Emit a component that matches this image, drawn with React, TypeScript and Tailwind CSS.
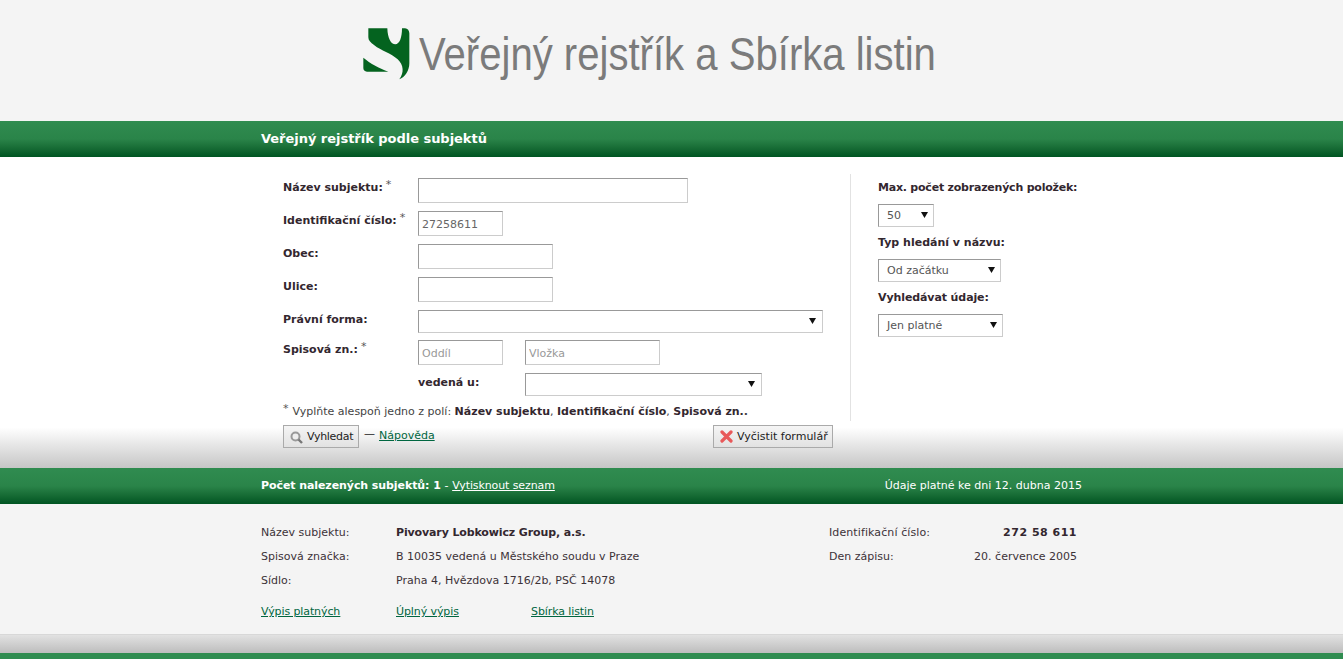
const font = "font-['DejaVu_Sans',Verdana,sans-serif]";

function GreenBar({ children }: { children: React.ReactNode }) {
  return (
    <div className="h-[36px] bg-gradient-to-b from-[#308c50] via-[#2a8449] to-[#005522] text-white">
      <div className="mx-auto flex h-full w-[821px] items-center justify-between">{children}</div>
    </div>
  );
}

function Logo() {
  return (
    <svg width="47" height="52" viewBox="24 24 141 156" className="shrink-0">
      <path
        d="M40 25 L97 25 C98 56 108 73 121 73 C133 73 141 54 141 25 L150 25 C158 26 163 32 163 40 L163 130 C163 152 150 172 133 178 C148 158 146 135 128 118 C108 100 78 92 58 76 C46 67 40 62 40 52 Z"
        fill="#04631f"
      />
      <path d="M25 113 C45 130 75 146 100 155 L36 155 C29 155 25 150 25 144 Z" fill="#04631f" />
    </svg>
  );
}

function Field({ label, star, children, className }: { label?: string; star?: boolean; children: React.ReactNode; className?: string }) {
  return (
    <div className={"flex " + (className ?? "mb-[8px]")}>
      <label className="w-[135px] shrink-0 pt-[3px] font-bold leading-[14px] text-[#33272f]">
        {label}
        {star && <sup className="relative top-[-1px] ml-[3px] align-top text-[11px] font-normal leading-[10px] text-[#555]">*</sup>}
      </label>
      {children}
    </div>
  );
}

function TextInput({ width, value, placeholder, className }: { width: string; value?: string; placeholder?: string; className?: string }) {
  return (
    <input
      readOnly
      defaultValue={value}
      placeholder={placeholder}
      className={
        "h-[25px] border border-t-[#999] border-r-[#ccc] border-b-[#ccc] border-l-[#999] bg-white px-[3px] pt-[2px] text-[11px] text-[#666] outline-none placeholder:text-[#999] " +
        width + " " + (className ?? "")
      }
    />
  );
}

function Select({ width, value, arrowRight = "right-[5px]" }: { width: string; value?: string; arrowRight?: string }) {
  return (
    <div className={"relative h-[23px] border border-t-[#999] border-r-[#ccc] border-b-[#ccc] border-l-[#999] bg-white pl-[8px] leading-[22px] text-[#555] " + width}>
      {value}
      <svg width="7" height="7" viewBox="0 0 7 7" className={"absolute top-[6px] " + arrowRight}>
        <path d="M0 1 L7 1 L3.5 7 Z" fill="#111" />
      </svg>
    </div>
  );
}

export default function App() {
  return (
    <div className={font + " min-h-[659px] overflow-hidden bg-[#f4f4f4] text-[11px] text-[#333]"}>
      <div className="flex h-[121px] items-start pt-[28px] pl-[363px]">
        <Logo />
        <span className="ml-[9px] mt-[-1px] origin-left scale-x-[0.853] font-['Liberation_Sans',sans-serif] text-[47px] leading-[54px] whitespace-nowrap text-[#7b7b7b]">
          Veřejný rejstřík a Sbírka listin
        </span>
      </div>

      <GreenBar>
        <span className="text-[13px] font-bold tracking-[-0.03px]">Veřejný rejstřík podle subjektů</span>
      </GreenBar>

      <div className="h-[311px] bg-gradient-to-b from-white from-[87%] to-[#c6c6c6]">
        <div className="mx-auto flex w-[821px] pt-[17px]">
          <div className="w-[589px] shrink-0 pl-[22px]">
            <div className="w-[550px] pt-[4px]">
              <Field label="Název subjektu:" star>
                <TextInput width="w-[270px]" />
              </Field>
              <Field label="Identifikační číslo:" star>
                <TextInput width="w-[85px]" value="27258611" />
              </Field>
              <Field label="Obec:">
                <TextInput width="w-[135px]" />
              </Field>
              <Field label="Ulice:">
                <TextInput width="w-[135px]" />
              </Field>
              <Field label="Právní forma:" className="mb-[7px]">
                <Select width="w-[405px]" arrowRight="right-[6px]" />
              </Field>
              <Field label="Spisová zn.:" star>
                <TextInput width="w-[85px]" placeholder="Oddíl" />
                <TextInput width="w-[135px]" placeholder="Vložka" className="ml-[22px]" />
              </Field>
              <div className="flex">
                <span className="w-[107px] pl-[135px] pt-[3px] font-bold leading-[14px] text-[#33272f] box-content whitespace-nowrap">vedená u:</span>
                <Select width="w-[237px]" arrowRight="right-[6px]" />
              </div>
              <p className="mt-[9px] leading-[14px] text-[#444] whitespace-nowrap">
                <sup className="relative top-[-1px] mr-[4px] align-top text-[11px] leading-[10px] text-[#555]">*</sup>
                Vyplňte alespoň jedno z polí: <b className="text-[#33272f]">Název subjektu</b>, <b className="text-[#33272f]">Identifikační číslo</b>, <b className="text-[#33272f]">Spisová zn.</b>
                <b>.</b>
              </p>
              <div className="mt-[6px] flex items-start justify-between">
                <div className="flex items-start">
                  <button className="flex h-[23px] w-[76px] items-center border border-[#aaa] bg-gradient-to-b from-[#f5f5f5] to-[#e2e2e2] pt-[2px] pl-[6px] tracking-[-0.3px] text-[#222]">
                    <svg width="13" height="13" viewBox="0 0 13 13" className="mr-[4px]">
                      <circle cx="5.5" cy="5.5" r="4" fill="#eee" stroke="#999" strokeWidth="2" />
                      <path d="M8.5 8.5 L12 12" stroke="#777" strokeWidth="2.4" />
                    </svg>
                    Vyhledat
                  </button>
                  <span className="mx-[5px] leading-[18px] text-[#222]">—</span>
                  <a className="ml-[-1px] pt-[2px] leading-[18px] text-[#006640] underline">Nápověda</a>
                </div>
                <button className="flex h-[23px] w-[120px] items-center border border-[#aaa] bg-gradient-to-b from-[#f5f5f5] to-[#e2e2e2] pt-[2px] pl-[6px] text-[#222]">
                  <svg width="13" height="13" viewBox="0 0 13 13" className="mr-[4px] mt-[-2px]">
                    <path d="M2 2 L11 11 M11 2 L2 11" stroke="#e8595a" strokeWidth="3.2" strokeLinecap="round" />
                  </svg>
                  Vyčistit formulář
                </button>
              </div>
            </div>
          </div>
          <div className="h-[247px] flex-1 border-l border-[#e2e2e2] pl-[27px] whitespace-nowrap">
            <p className="mt-[7px] font-bold leading-[14px] tracking-[-0.22px] text-[#33272f]">Max. počet zobrazených položek:</p>
            <div className="mt-[9px]">
              <Select width="w-[56px]" value="50" />
            </div>
            <p className="mt-[9px] font-bold leading-[14px] text-[#33272f]">Typ hledání v názvu:</p>
            <div className="mt-[9px]">
              <Select width="w-[123px]" value="Od začátku" />
            </div>
            <p className="mt-[9px] font-bold leading-[14px] tracking-[-0.1px] text-[#33272f]">Vyhledávat údaje:</p>
            <div className="mt-[9px]">
              <Select width="w-[125px]" value="Jen platné" />
            </div>
          </div>
        </div>
      </div>

      <GreenBar>
        <span className="font-bold tracking-[-0.08px]">
          Počet nalezených subjektů: 1 <span className="font-normal">-</span> <a className="font-normal tracking-[-0.1px] underline">Vytisknout seznam</a>
        </span>
        <span>Údaje platné ke dni 12. dubna 2015</span>
      </GreenBar>

      <div className="h-[131px] border-b border-[#d8d8d8]">
        <div className="mx-auto w-[821px] pt-[22px] leading-[14px] text-[#3c3238]">
          <div className="flex">
            <div className="w-[568px]">
              <div className="flex h-[24px]">
                <span className="w-[135px]">Název subjektu:</span>
                <b className="tracking-[-0.13px] text-[#33272f]">Pivovary Lobkowicz Group, a.s.</b>
              </div>
              <div className="flex h-[24px]">
                <span className="w-[135px]">Spisová značka:</span>
                <span>B 10035 vedená u Městského soudu v Praze</span>
              </div>
              <div className="flex h-[24px]">
                <span className="w-[135px]">Sídlo:</span>
                <span>Praha 4, Hvězdova 1716/2b, PSČ 14078</span>
              </div>
            </div>
            <div className="w-[248px]">
              <div className="flex h-[24px] justify-between">
                <span className="tracking-[0.1px]">Identifikační číslo:</span>
                <b className="tracking-[0.5px] text-[#33272f]">272 58 611</b>
              </div>
              <div className="flex h-[24px] justify-between">
                <span>Den zápisu:</span>
                <span>20. července 2005</span>
              </div>
            </div>
          </div>
          <div className="mt-[7px] flex tracking-[-0.1px] text-[#006640] underline">
            <a className="w-[135px]">Výpis platných</a>
            <a className="w-[135px]">Úplný výpis</a>
            <a>Sbírka listin</a>
          </div>
        </div>
      </div>

      <div className="h-[18px] bg-gradient-to-b from-[#e2e2e2] to-[#bdbdbd]" />
      <div className="h-[6px] bg-[#308c50]" />
    </div>
  );
}
